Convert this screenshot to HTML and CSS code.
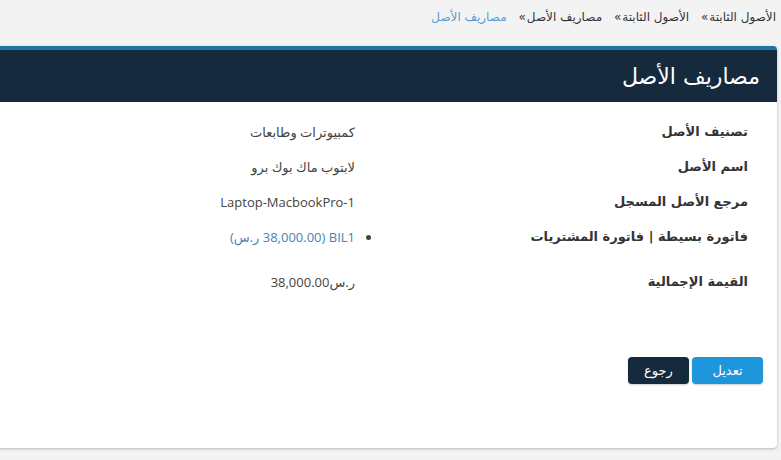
FILE: index.html
```html
<!DOCTYPE html>
<html lang="ar" dir="rtl">
<head>
  <meta charset="UTF-8" />
  <title>مصاريف الأصل</title>
  <link rel="stylesheet" href="styles.css">
</head>
<body>
  <div class="crumbs">
    <a href="#">الأصول الثابتة</a><span class="sep">»</span>
    <a href="#">الأصول الثابتة</a><span class="sep">»</span>
    <a href="#">مصاريف الأصل</a><span class="sep">»</span>
    <span class="current">مصاريف الأصل</span>
  </div>

  <div class="card">
    <div class="card-head">
      <h1>مصاريف الأصل</h1>
    </div>

    <div class="card-body">
      <div class="row">
        <div class="label">تصنيف الأصل</div>
        <div class="value">كمبيوترات وطابعات</div>
      </div>
      <div class="row">
        <div class="label">اسم الأصل</div>
        <div class="value">لابتوب ماك بوك برو</div>
      </div>
      <div class="row">
        <div class="label">مرجع الأصل المسجل</div>
        <div class="value">Laptop-MacbookPro-1</div>
      </div>
      <div class="row">
        <div class="label">فاتورة بسيطة | فاتورة المشتريات</div>
        <ul class="value bills">
          <li><a href="#">BIL1 (38,000.00 ر.س)</a></li>
        </ul>
      </div>
      <div class="row total">
        <div class="label">القيمة الإجمالية</div>
        <div class="value">ر.س38,000.00</div>
      </div>

      <div class="actions">
        <button class="btn btn-edit">تعديل</button>
        <button class="btn btn-back">رجوع</button>
      </div>
    </div>
  </div>
</body>
</html>
```

FILE: styles.css
```css
body {
  margin: 0;
  background-color: #f3f3f3;
  font-family: "DejaVu Sans", "Open Sans", sans-serif;
  font-size: 13px;
  color: #333;
}

a {
  text-decoration: none;
  color: inherit;
}

.crumbs {
  padding: 10px 5px 0 0;
  height: 36px;
  box-sizing: border-box;
  font-size: 12px;
  color: #333;
}

.crumbs .sep {
  margin: 0 1px 0 8px;
}

.crumbs .current {
  color: #5b9bd5;
}

.card {
  margin: 10px 4px 13px -10px;
  background: #fff;
  border-top: 4px solid #1e76a6;
  border-radius: 4px;
  box-shadow: 0 1px 3px rgba(0,0,0,0.25);
  overflow: hidden;
}

.card-head {
  background-color: #152a3d;
  height: 52px;
  padding: 0 17px;
  display: flex;
  align-items: center;
}

.card-head h1 {
  margin: 0;
  color: #fff;
  font-size: 22px;
  font-weight: normal;
}

.card-body {
  padding: 12px 29px 64px;
}

.row {
  display: flex;
  align-items: center;
  height: 35px;
}

.row.total {
  margin-top: 10px;
}

.label {
  width: 393px;
  font-weight: bold;
  font-size: 13px;
  color: #333;
}

.value {
  color: #444;
  font-family: "Open Sans", "DejaVu Sans", sans-serif;
}

.bills {
  margin: 0;
  padding: 0;
  list-style: disc outside;
}

.bills a {
  color: #4a7fb5;
}

.actions {
  display: flex;
  gap: 3px;
  margin-top: 58px;
  margin-right: -15px;
}

.btn {
  border: none;
  border-radius: 4px;
  height: 27px;
  color: #fff;
  font-family: inherit;
  font-size: 13px;
  cursor: pointer;
  box-shadow: 0 1px 2px rgba(0,0,0,0.2);
}

.btn-edit {
  background-color: #1e96dc;
  width: 71px;
}

.btn-back {
  background-color: #152a3d;
  width: 61px;
}
```
